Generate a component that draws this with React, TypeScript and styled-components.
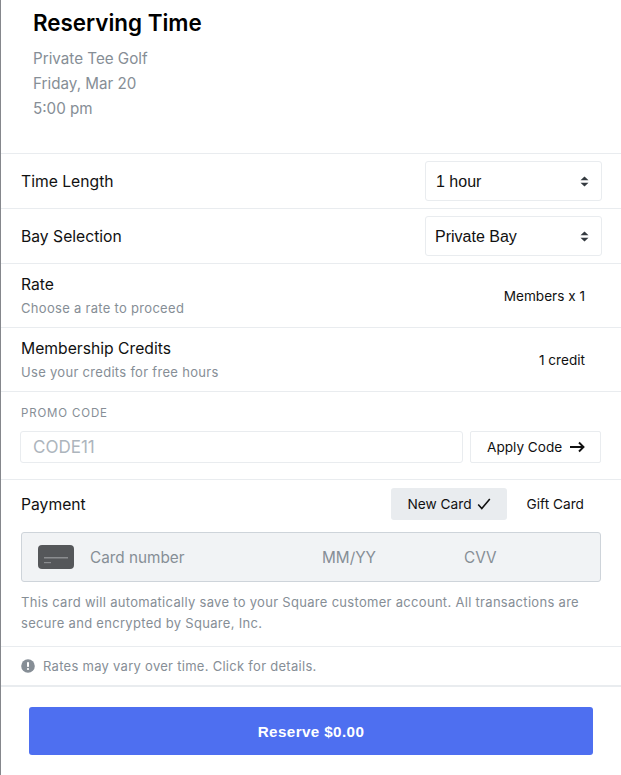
import React from 'react';
import styled, { createGlobalStyle } from 'styled-components';

const GlobalStyle = createGlobalStyle`
  html, body {
    margin: 0;
    padding: 0;
    background: #fff;
  }
  body {
    font-family: Inter, "Liberation Sans", sans-serif;
    color: #111;
  }
  * {
    box-sizing: border-box;
  }
`;

const Page = styled.div`
  width: 621px;
  height: 775px;
  overflow: hidden;
  border-left: 1px solid #85878c;
  display: flex;
  flex-direction: column;
`;

const Header = styled.header`
  height: 154px;
  flex: none;
  padding: 9px 0 0 32px;
  border-bottom: 1px solid #e9ecef;
`;

const Title = styled.h1`
  margin: 0 0 10px;
  font-size: 22.4px;
  line-height: 27px;
  font-weight: 600;
  color: #000;
`;

const SubLine = styled.div`
  font-size: 15.2px;
  line-height: 25px;
  color: #868e96;
`;

const Row = styled.div<{ $height: number }>`
  height: ${({ $height }) => $height}px;
  flex: none;
  padding: 0 19px 0 20px;
  display: flex;
  align-items: center;
  justify-content: space-between;
  border-bottom: 1px solid #e9ecef;
`;

const Label = styled.div`
  padding-top: 1px;
  font-size: 15.7px;
  line-height: 20px;
  color: #111;
`;

const PaymentLabel = styled(Label)`
  padding-top: 3px;
`;

const Hint = styled.div`
  margin-top: 4px;
  font-size: 13px;
  line-height: 18px;
  letter-spacing: 0.3px;
  color: #868e96;
`;

const SelectBox = styled.div<{ $inset: number }>`
  width: 177px;
  height: 40px;
  padding: 2px 12px 0 ${({ $inset }) => $inset}px;
  display: flex;
  align-items: center;
  justify-content: space-between;
  border: 1px solid #e9ecef;
  border-radius: 3px;
  font-family: "Liberation Sans", Arial, sans-serif;
  font-size: 16px;
  color: #111;
`;

const CaretIcon = styled.svg`
  margin-bottom: 2px;
`;

const Value = styled.div`
  padding-right: 17px;
  font-size: 13.6px;
  color: #111;
`;

const PromoSection = styled.section`
  height: 88px;
  flex: none;
  padding: 14px 20px 0 19px;
  border-bottom: 1px solid #e9ecef;
`;

const PromoLabel = styled.div`
  margin: 0 0 11px 1px;
  font-size: 11.5px;
  line-height: 14px;
  font-weight: 400;
  letter-spacing: 0.85px;
  color: #868e96;
`;

const PromoRow = styled.div`
  display: flex;
  gap: 7px;
`;

const PromoInput = styled.div`
  flex: 1;
  height: 32px;
  padding-left: 12px;
  display: flex;
  align-items: center;
  border: 1px solid #e9ecef;
  border-radius: 3px;
  font-size: 17px;
  color: #adb5bd;
`;

const ApplyButton = styled.div`
  width: 131px;
  height: 32px;
  padding-left: 16px;
  display: flex;
  align-items: center;
  gap: 7px;
  border: 1px solid #e9ecef;
  border-radius: 2px;
  font-size: 13.6px;
  color: #111;
`;

const PaymentSection = styled.section`
  height: 167px;
  flex: none;
  padding: 7px 20px 0 20px;
  border-bottom: 1px solid #e9ecef;
`;

const PaymentHead = styled.div`
  height: 33px;
  display: flex;
  align-items: center;
  justify-content: space-between;
`;

const CardTabs = styled.div`
  margin-right: 1px;
  display: flex;
  align-items: center;
  gap: 4px;
`;

const CardTab = styled.div<{ $active?: boolean }>`
  height: 32px;
  padding: 0 16px;
  display: flex;
  align-items: center;
  gap: 5px;
  border-radius: 3px;
  font-size: 13.7px;
  color: #111;
  background: ${({ $active }) => ($active ? '#e9ecef' : 'transparent')};
`;

const CardField = styled.div`
  height: 50px;
  margin-top: 12px;
  padding-left: 16px;
  display: flex;
  align-items: center;
  border: 1px solid #ced4da;
  border-radius: 3px;
  background: #f1f3f5;
  font-size: 15.3px;
  color: #868e96;
`;

const CardIcon = styled.svg`
  width: 36px;
  height: 24px;
  flex: none;
  margin-right: 16px;
`;

const CardPart = styled.div<{ $width: number }>`
  width: ${({ $width }) => $width}px;
`;

const Notice = styled.p`
  margin: 10px 0 0;
  font-size: 13px;
  line-height: 21px;
  letter-spacing: 0.3px;
  color: #868e96;
`;

const RatesRow = styled.div`
  height: 40px;
  flex: none;
  padding-left: 20px;
  display: flex;
  align-items: center;
  gap: 8px;
  border-bottom: 2px solid #e9ecef;
  font-size: 13px;
  letter-spacing: 0.28px;
  color: #868e96;
`;

const Footer = styled.footer`
  padding: 20px 28px 0;
`;

const ReserveButton = styled.div`
  width: 564px;
  height: 48px;
  display: flex;
  align-items: center;
  justify-content: center;
  border-radius: 3px;
  background: #4e6ff0;
  font-family: "Liberation Sans", Arial, sans-serif;
  font-size: 15.2px;
  font-weight: 700;
  letter-spacing: 0.4px;
  color: #fff;
`;

const SelectCaret = () => (
  <CaretIcon width="9" height="11" viewBox="0 0 9 11" aria-hidden="true">
    <path d="M4.5 0.5 8.5 4.3H0.5Z M4.5 10.5 0.5 6.7H8.5Z" fill="#343a40" />
  </CaretIcon>
);

const ArrowGlyph = () => (
  <svg width="16" height="16" viewBox="0 0 16 16" fill="none" aria-hidden="true">
    <path d="M1 8H14.5 M10 3.5 14.5 8 10 12.5" stroke="#111" strokeWidth="1.9" />
  </svg>
);

const CheckGlyph = () => (
  <svg width="14" height="12" viewBox="0 0 14 12" fill="none" aria-hidden="true">
    <path d="M1.2 6.5 4.8 10.6 12.8 1" stroke="#111" strokeWidth="1.6" />
  </svg>
);

const InfoIcon = () => (
  <svg width="14" height="14" viewBox="0 0 14 14" aria-hidden="true">
    <circle cx="7" cy="7" r="6.8" fill="#868e96" />
    <rect x="6" y="3" width="2" height="5" rx="0.8" fill="#fff" />
    <circle cx="7" cy="10" r="1.1" fill="#fff" />
  </svg>
);

export default function App() {
  return (
    <Page>
      <GlobalStyle />
      <Header>
        <Title>Reserving Time</Title>
        <SubLine>Private Tee Golf</SubLine>
        <SubLine>Friday, Mar 20</SubLine>
        <SubLine>5:00 pm</SubLine>
      </Header>

      <Row $height={55}>
        <Label>Time Length</Label>
        <SelectBox $inset={10}>
          1 hour
          <SelectCaret />
        </SelectBox>
      </Row>
      <Row $height={55}>
        <Label>Bay Selection</Label>
        <SelectBox $inset={9}>
          Private Bay
          <SelectCaret />
        </SelectBox>
      </Row>
      <Row $height={64}>
        <div>
          <Label>Rate</Label>
          <Hint>Choose a rate to proceed</Hint>
        </div>
        <Value>Members x 1</Value>
      </Row>
      <Row $height={64}>
        <div>
          <Label>Membership Credits</Label>
          <Hint>Use your credits for free hours</Hint>
        </div>
        <Value>1 credit</Value>
      </Row>

      <PromoSection>
        <PromoLabel>PROMO CODE</PromoLabel>
        <PromoRow>
          <PromoInput>CODE11</PromoInput>
          <ApplyButton>
            Apply Code
            <ArrowGlyph />
          </ApplyButton>
        </PromoRow>
      </PromoSection>

      <PaymentSection>
        <PaymentHead>
          <PaymentLabel>Payment</PaymentLabel>
          <CardTabs>
            <CardTab $active>
              New Card
              <CheckGlyph />
            </CardTab>
            <CardTab>Gift Card</CardTab>
          </CardTabs>
        </PaymentHead>
        <CardField>
          <CardIcon viewBox="0 0 36 24" aria-hidden="true">
            <rect width="36" height="24" rx="4" fill="#55575a" />
            <rect x="6" y="12" width="24" height="1.5" fill="#8b8d90" />
            <rect x="6" y="17" width="7" height="1.2" fill="#8b8d90" />
          </CardIcon>
          <CardPart $width={232}>Card number</CardPart>
          <CardPart $width={142}>MM/YY</CardPart>
          <CardPart $width={60}>CVV</CardPart>
        </CardField>
        <Notice>
          This card will automatically save to your Square customer account. All transactions are
          secure and encrypted by Square, Inc.
        </Notice>
      </PaymentSection>

      <RatesRow>
        <InfoIcon />
        Rates may vary over time. Click for details.
      </RatesRow>

      <Footer>
        <ReserveButton>Reserve $0.00</ReserveButton>
      </Footer>
    </Page>
  );
}
